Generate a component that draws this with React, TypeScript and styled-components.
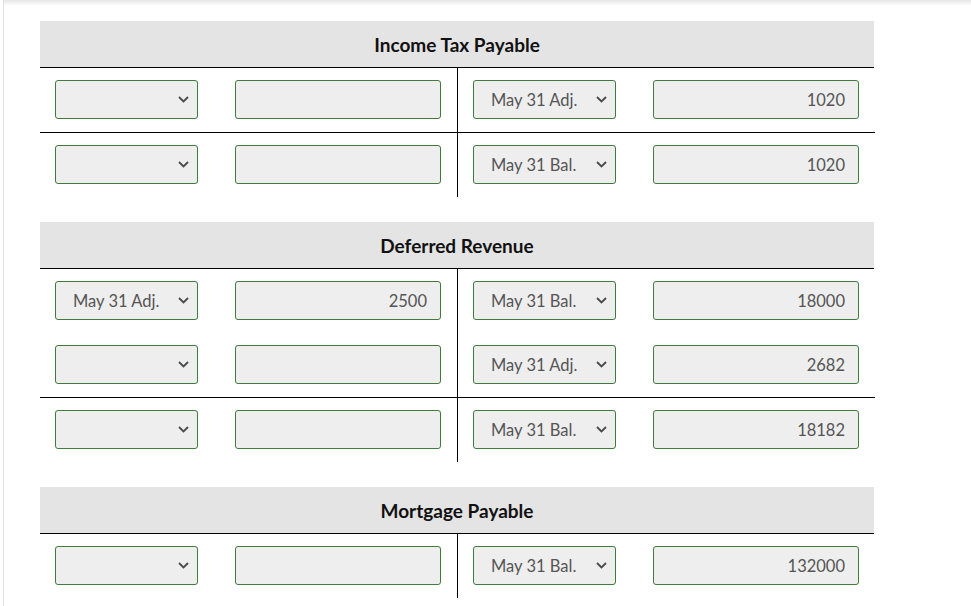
import React from "react";
import styled, { createGlobalStyle } from "styled-components";

interface Entry {
  date: string;
  amount: string;
}

interface Row {
  debit: Entry;
  credit: Entry;
  balance?: boolean;
}

interface Account {
  title: string;
  rows: Row[];
}

const empty: Entry = { date: "", amount: "" };

const accounts: Account[] = [
  {
    title: "Income Tax Payable",
    rows: [
      { debit: empty, credit: { date: "May 31 Adj.", amount: "1020" } },
      { debit: empty, credit: { date: "May 31 Bal.", amount: "1020" }, balance: true },
    ],
  },
  {
    title: "Deferred Revenue",
    rows: [
      {
        debit: { date: "May 31 Adj.", amount: "2500" },
        credit: { date: "May 31 Bal.", amount: "18000" },
      },
      { debit: empty, credit: { date: "May 31 Adj.", amount: "2682" } },
      { debit: empty, credit: { date: "May 31 Bal.", amount: "18182" }, balance: true },
    ],
  },
  {
    title: "Mortgage Payable",
    rows: [{ debit: empty, credit: { date: "May 31 Bal.", amount: "132000" } }],
  },
];

const GlobalStyle = createGlobalStyle`
  html, body {
    margin: 0;
    padding: 0;
    background: #fff;
    font-family: Lato, "Open Sans", sans-serif;
  }
`;

const Page = styled.div`
  margin-left: 3px;
  border-left: 1px solid #e2e2e2;
  min-height: 606px;
  padding: 21px 0 0 36px;
  background: linear-gradient(to bottom, #e6e6e6 0px, #ffffff 6px);
  background-repeat: no-repeat;
`;

const Section = styled.section`
  width: 834px;
  margin-bottom: 25px;
`;

const Header = styled.div`
  height: 46px;
  background: #e4e4e4;
  border-bottom: 1px solid #000;
  display: flex;
  align-items: center;
  justify-content: center;
  font-size: 19px;
  font-weight: 700;
  color: #111;
`;

const Body = styled.div`
  display: grid;
  grid-template-columns: 1fr 1fr;
`;

const Side = styled.div<{ $left?: boolean; $sep?: boolean }>`
  display: flex;
  align-items: center;
  padding: 12px 16px 13px 15px;
  gap: 37px;
  border-right: ${(p) => (p.$left ? "1px solid #000" : "none")};
  border-top: ${(p) => (p.$sep ? "1px solid #000" : "none")};
`;

const SelectWrap = styled.div`
  position: relative;
  width: 143px;
  height: 39px;
  flex: none;
`;

const Select = styled.select`
  appearance: none;
  width: 100%;
  height: 100%;
  box-sizing: border-box;
  border: 1px solid #3f7b3c;
  border-radius: 3px;
  background: #eeeeee;
  padding: 0 0 0 17px;
  font-family: Lato, sans-serif;
  font-size: 16.5px;
  color: #555;
  outline: none;
`;

const Chevron = styled.svg`
  position: absolute;
  right: 9px;
  top: 16px;
  pointer-events: none;
`;

const Amount = styled.input`
  width: 206px;
  height: 39px;
  box-sizing: border-box;
  border: 1px solid #3f7b3c;
  border-radius: 3px;
  background: #eeeeee;
  padding: 0 13px 0 8px;
  text-align: right;
  font-family: Lato, sans-serif;
  font-size: 16.5px;
  color: #555;
  outline: none;
`;

const DateSelect = ({ value }: { value: string }) => (
  <SelectWrap>
    <Select value={value} onChange={() => {}}>
      <option value=""></option>
      <option value="May 31 Adj.">May 31 Adj.</option>
      <option value="May 31 Bal.">May 31 Bal.</option>
    </Select>
    <Chevron width="11" height="7" viewBox="0 0 11 7">
      <path d="M1 1 L5.5 5.5 L10 1" fill="none" stroke="#4a4a4a" strokeWidth="1.8" />
    </Chevron>
  </SelectWrap>
);

const EntryCell = ({ entry, left, sep }: { entry: Entry; left?: boolean; sep?: boolean }) => (
  <Side $left={left} $sep={sep}>
    <DateSelect value={entry.date} />
    <Amount value={entry.amount} readOnly />
  </Side>
);

export default function App() {
  return (
    <>
      <GlobalStyle />
      <Page>
        {accounts.map((acc) => (
          <Section key={acc.title}>
            <Header>{acc.title}</Header>
            <Body>
              {acc.rows.map((row, i) => (
                <React.Fragment key={i}>
                  <EntryCell entry={row.debit} left sep={row.balance} />
                  <EntryCell entry={row.credit} sep={row.balance} />
                </React.Fragment>
              ))}
            </Body>
          </Section>
        ))}
      </Page>
    </>
  );
}
